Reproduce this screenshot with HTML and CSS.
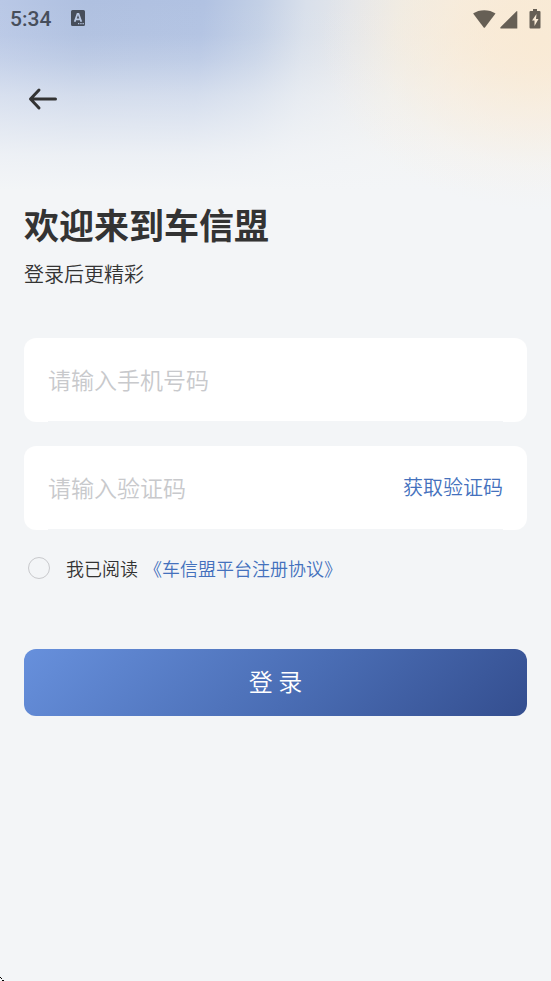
FILE: index.html
```html
<!DOCTYPE html>
<html lang="zh-CN">
<head>
<meta charset="utf-8">
<meta name="viewport" content="width=device-width, initial-scale=1">
<title>登录</title>
<link rel="stylesheet" href="styles.css">
</head>
<body>
<div class="screen">
  <header class="status-bar">
    <div class="status-group">
      <span class="clock">5:34</span>
      <svg class="keyboard-icon" width="14" height="16" viewBox="0 0 14 16" aria-hidden="true">
        <path fill="currentColor" d="M1.500 0h11A1.500 1.500 0 0 1 14 1.500v13a1.500 1.500 0 0 1-1.500 1.500h-11A1.500 1.500 0 0 1 0 14.500v-13A1.500 1.500 0 0 1 1.500 0z"/>
        <path d="M3.700 11.800 6.500 3.800h1L10.300 11.800M5 9.300h4" fill="none" stroke="#b8c7e3" stroke-width="1.800"/>
        <path d="M7 13h1.300v1.300H7zM9.300 13h1.300v1.300H9.300zM11.500 13h1.300v1.300h-1.300z" fill="#b8c7e3"/>
      </svg>
    </div>
    <svg class="system-icons" width="70" height="20" viewBox="0 0 70 20" aria-hidden="true">
      <g fill="currentColor">
        <path d="M.1 4.500C6 0 16.500 0 22.500 4.500L12.100 18.300q-.8 1-1.600 0z"/>
        <path d="M44.300 2.500v17H28.500q-2 0-.8-1.500L42.800 3q1.500-1.500 1.500-.5z"/>
        <path fill-rule="evenodd" d="M60 0h4v2H66.500q1 0 1 1v15.500q0 1-1 1h-9q-1 0-1-1V3q0-1 1-1h2.500zM63.500 5l-4.500 6.500h2.500V17l4-7h-2.500z"/>
      </g>
    </svg>
  </header>

  <nav class="nav">
    <button class="back" type="button" aria-label="返回">
      <svg width="30" height="24" viewBox="0 0 30 24" aria-hidden="true">
        <path d="M27.500 12H3M11 3 2.500 12l8.500 9" fill="none" stroke="currentColor" stroke-width="3" stroke-linecap="round" stroke-linejoin="round"/>
      </svg>
    </button>
  </nav>

  <main class="content">
    <h1 class="title">欢迎来到车信盟</h1>
    <p class="subtitle">登录后更精彩</p>
    <form class="form">
      <div class="field">
        <input class="field-input" type="tel" aria-label="手机号码" placeholder="请输入手机号码">
      </div>
      <div class="field">
        <input class="field-input" type="text" aria-label="验证码" placeholder="请输入验证码">
        <button class="send-code" type="button">获取验证码</button>
      </div>
      <div class="agreement">
        <input class="agree-radio" type="radio" id="agree">
        <label for="agree">我已阅读</label>
        <a class="agreement-link" href="#">《车信盟平台注册协议》</a>
      </div>
      <button class="submit" type="submit">登 录</button>
    </form>
  </main>
  <svg class="corner-mark" width="4" height="4" viewBox="0 0 4 4" aria-hidden="true">
    <path d="M0 0h1v1H0zM1 1h1v1H1zM2 3h2v1H2z"/>
  </svg>
</div>
</body>
</html>
```
FILE: styles.css
```css
* {
  box-sizing: border-box;
}

body {
  margin: 0;
  background: #f3f4f6;
  color: #333;
  font-family: "Noto Sans CJK SC", sans-serif;
  font-weight: 350;
}

button,
input {
  margin: 0;
  padding: 0;
  border: 0;
  background: none;
  font-family: inherit;
  font-weight: inherit;
}

.screen {
  position: relative;
  min-height: 100vh;
  overflow: hidden;
  background-color: #f3f5f7;
  background-image:
    radial-gradient(220px 170px at 98% 40px, #f9ead5 0%, #f9ead5aa 25%, #f8ecdb77 50%, #f6efe438 75%, #f3f5f700 100%),
    linear-gradient(#f3f5f700 0, #f3f5f70d 35px, #f3f5f738 60px, #f3f5f788 95px, #f3f5f7b8 125px, #f3f5f7e6 155px, #f3f5f7 190px),
    linear-gradient(95deg, #b9c8e6 0%, #afc0e0 15%, #b1c2e2 36%, #c3d0e6 46%, #d9e0eb 54%, #e4e6ea 62%, #efebe3 71%, #f6ecdd 82%, #f9ead6 100%);
  background-repeat: no-repeat;
  background-size: 100% 220px, 100% 100%, 100% 190px;
}

.status-bar {
  display: flex;
  align-items: center;
  justify-content: space-between;
  height: 38px;
  padding: 0 8px 0 10px;
}

.status-group {
  display: flex;
  align-items: center;
  gap: 20px;
  color: #474e5b;
}

.clock {
  font: 500 21px/38px Roboto, sans-serif;
}

.keyboard-icon {
  margin-bottom: 2px;
}

.system-icons {
  color: #665f55;
}

.nav {
  display: flex;
  height: 124px;
  padding: 49px 28px 0;
}

.back {
  height: 24px;
  color: #333;
}

.back svg {
  display: block;
}

.content {
  padding: 36px 24px 0;
}

.title {
  margin: 0;
  font-size: 35px;
  line-height: 52px;
  font-weight: 700;
}

.subtitle {
  margin: 8px 0 0;
  font-size: 20px;
  line-height: 32px;
}

.form {
  display: flex;
  flex-direction: column;
  gap: 24px;
  margin-top: 48px;
}

.field {
  display: flex;
  align-items: center;
  height: 84px;
  padding: 0 24px 3px;
  border-radius: 12px;
  background: linear-gradient(#f3f5f7, #f3f5f7) center bottom / calc(100% - 48px) 1px no-repeat #fff;
}

.field-input {
  flex: 1;
  min-width: 0;
  height: 48px;
  font-size: 23px;
  color: #333;
  outline: none;
}

.field-input::placeholder {
  color: #c8c9cc;
  opacity: 1;
}

.send-code {
  font-size: 20px;
  line-height: 32px;
  color: #4471bd;
}

.agreement {
  display: flex;
  align-items: center;
  height: 28px;
  padding-left: 4px;
  font-size: 18px;
  line-height: 28px;
}

.agree-radio {
  appearance: none;
  width: 22px;
  height: 22px;
  margin-right: 16px;
  border: 1px solid #c8c9cc;
  border-radius: 50%;
}

.agree-radio:checked {
  border: 6px solid #4471bd;
}

.agreement-link {
  margin-left: 6px;
  color: #4471bd;
  text-decoration: none;
}

.submit {
  height: 67px;
  margin-top: 43px;
  padding-bottom: 4px;
  border-radius: 12px;
  background: linear-gradient(135deg, #6790dc, #4a6db4 55%, #344e8f);
  color: #fff;
  font-size: 24px;
  line-height: 36px;
}

.corner-mark {
  position: absolute;
  left: 0;
  bottom: 0;
}
```
